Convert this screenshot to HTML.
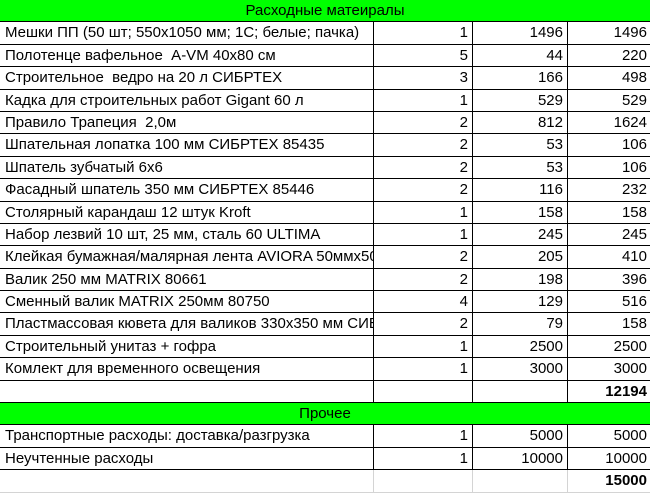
<!DOCTYPE html>
<html><head><meta charset="utf-8"><style>
*{margin:0;padding:0;box-sizing:border-box}
body{width:650px;height:493px;overflow:hidden;background:#fff;font-family:"Liberation Sans","DejaVu Sans",sans-serif;font-size:15px;color:#000}
.r{position:relative;height:22.4px;display:flex;border-bottom:1px solid #000;white-space:nowrap}
.c{height:100%;border-right:1px solid #000;line-height:21px;overflow:hidden}
.n{width:374px;padding-left:5px}
.q{width:99px;text-align:right;padding-right:4px}
.p{width:95px;text-align:right;padding-right:4px}
.t{width:82px;text-align:right;padding-right:3px;border-right:none}
.g{background:#00ff00;justify-content:center;line-height:21px}
.b{font-weight:bold}
.last{border-bottom:1px solid #d4d4d4}
.last .c{border-right:1px solid #d4d4d4}
.last .t{border-right:none}
</style></head><body>
<div class="r g">Расходные матеиралы</div>
<div class="r"><div class="c n">Мешки ПП (50 шт; 550x1050 мм; 1С; белые; пачка)</div><div class="c q">1</div><div class="c p">1496</div><div class="c t">1496</div></div>
<div class="r"><div class="c n">Полотенце вафельное&nbsp; A-VM 40x80 см</div><div class="c q">5</div><div class="c p">44</div><div class="c t">220</div></div>
<div class="r"><div class="c n">Строительное&nbsp; ведро на 20 л СИБРТЕХ</div><div class="c q">3</div><div class="c p">166</div><div class="c t">498</div></div>
<div class="r"><div class="c n">Кадка для строительных работ Gigant 60 л</div><div class="c q">1</div><div class="c p">529</div><div class="c t">529</div></div>
<div class="r"><div class="c n">Правило Трапеция&nbsp; 2,0м</div><div class="c q">2</div><div class="c p">812</div><div class="c t">1624</div></div>
<div class="r"><div class="c n">Шпательная лопатка 100 мм СИБРТЕХ 85435</div><div class="c q">2</div><div class="c p">53</div><div class="c t">106</div></div>
<div class="r"><div class="c n">Шпатель зубчатый 6х6</div><div class="c q">2</div><div class="c p">53</div><div class="c t">106</div></div>
<div class="r"><div class="c n">Фасадный шпатель 350 мм СИБРТЕХ 85446</div><div class="c q">2</div><div class="c p">116</div><div class="c t">232</div></div>
<div class="r"><div class="c n">Столярный карандаш 12 штук Kroft</div><div class="c q">1</div><div class="c p">158</div><div class="c t">158</div></div>
<div class="r"><div class="c n">Набор лезвий 10 шт, 25 мм, сталь 60 ULTIMA</div><div class="c q">1</div><div class="c p">245</div><div class="c t">245</div></div>
<div class="r"><div class="c n">Клейкая бумажная/малярная лента AVIORA 50ммх50м</div><div class="c q">2</div><div class="c p">205</div><div class="c t">410</div></div>
<div class="r"><div class="c n">Валик 250 мм MATRIX 80661</div><div class="c q">2</div><div class="c p">198</div><div class="c t">396</div></div>
<div class="r"><div class="c n">Сменный валик MATRIX 250мм 80750</div><div class="c q">4</div><div class="c p">129</div><div class="c t">516</div></div>
<div class="r"><div class="c n">Пластмассовая кювета для валиков 330х350 мм СИБРТЕХ</div><div class="c q">2</div><div class="c p">79</div><div class="c t">158</div></div>
<div class="r"><div class="c n">Строительный унитаз + гофра</div><div class="c q">1</div><div class="c p">2500</div><div class="c t">2500</div></div>
<div class="r"><div class="c n">Комлект для временного освещения</div><div class="c q">1</div><div class="c p">3000</div><div class="c t">3000</div></div>
<div class="r"><div class="c n"></div><div class="c q"></div><div class="c p"></div><div class="c t b">12194</div></div>
<div class="r g">Прочее</div>
<div class="r"><div class="c n">Транспортные расходы: доставка/разгрузка</div><div class="c q">1</div><div class="c p">5000</div><div class="c t">5000</div></div>
<div class="r"><div class="c n">Неучтенные расходы</div><div class="c q">1</div><div class="c p">10000</div><div class="c t">10000</div></div>
<div class="r last"><div class="c n"></div><div class="c q"></div><div class="c p"></div><div class="c t b">15000</div></div>
</body></html>
